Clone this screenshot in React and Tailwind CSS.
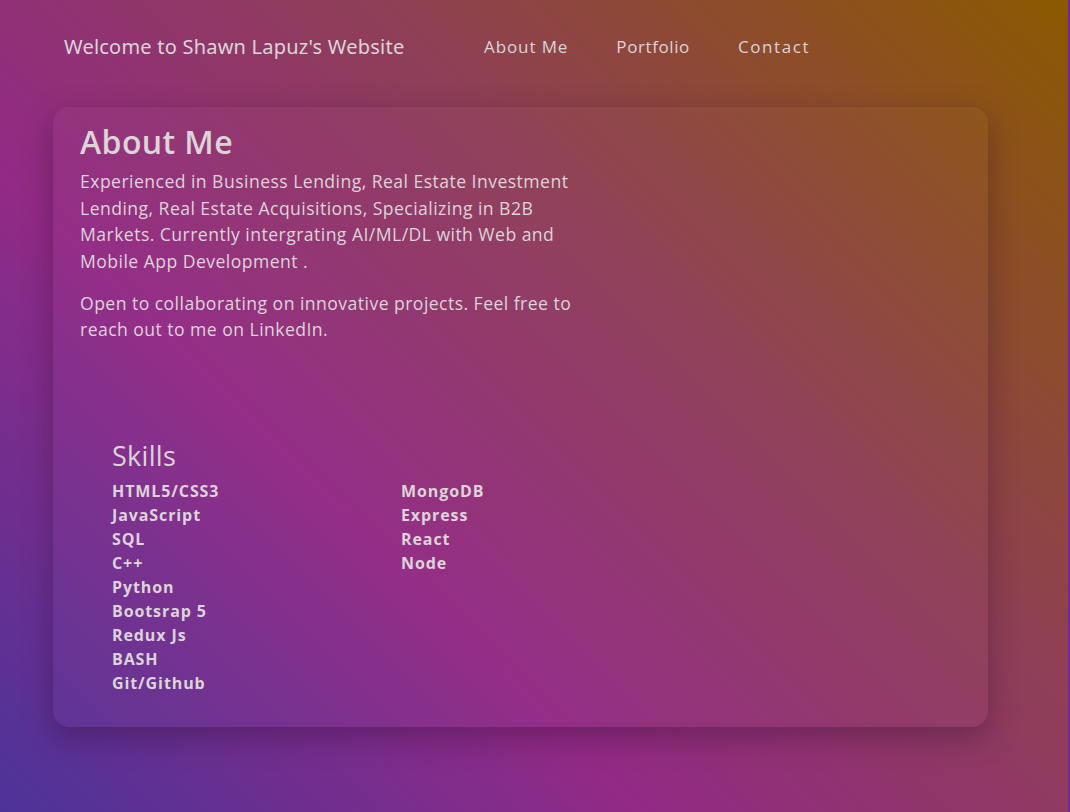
import React from "react";

const leftSkills = [
  "HTML5/CSS3",
  "JavaScript",
  "SQL",
  "C++",
  "Python",
  "Bootsrap 5",
  "Redux Js",
  "BASH",
  "Git/Github",
];

const rightSkills = ["MongoDB", "Express", "React", "Node"];

const App = () => {
  return (
    <div className="w-[1070px] h-[812px] bg-[#74299c] overflow-hidden">
      <div
        className="w-[1068px] h-[812px] text-[#dcd4d8] bg-[linear-gradient(45deg,#4c3399_0%,#922a86_34%,#8f3e58_62%,#8b5a00_100%)]"
        style={{ fontFamily: '"Open Sans", sans-serif' }}
      >
        {/* Header */}
        <header className="h-[94px] flex items-center pl-[64px]">
          <h1
            className="text-[20px] font-normal w-[420px] tracking-[0.22px]"
            style={{ fontFamily: '"Noto Sans", sans-serif' }}
          >
            Welcome to Shawn Lapuz's Website
          </h1>
          <nav className="flex items-center gap-[48px] text-[17px] font-medium tracking-[0.9px]">
            <a href="#about">About Me</a>
            <a href="#portfolio" className="tracking-[0.6px]">Portfolio</a>
            <a href="#contact" className="tracking-[1.6px]">Contact</a>
          </nav>
        </header>

        {/* About card */}
        <section className="ml-[53px] mt-[13px] w-[935px] h-[620px] rounded-2xl bg-white/[0.02] shadow-[0_10px_30px_rgba(40,10,40,0.35)] pt-[16px] px-[27px]">
          <h2 className="text-[32px] leading-[1.2] font-semibold tracking-[0.4px]">
            About Me
          </h2>
          <div className="w-[512px] text-[17.6px] leading-[26.4px] mt-[7px] tracking-[0.45px]">
            <p>
              Experienced in Business Lending, Real Estate Investment Lending,
              Real Estate Acquisitions, Specializing in B2B Markets. Currently
              intergrating AI/ML/DL with Web and Mobile App Development .
            </p>
            <p className="mt-[16px]">
              Open to collaborating on innovative projects. Feel free to reach
              out to me on LinkedIn.
            </p>
          </div>

          <div className="pl-[32px] mt-[97px]">
            <h3 className="text-[27px] leading-[1.2] font-normal tracking-[0.3px]">
              Skills
            </h3>
            <div className="grid grid-cols-[289px_200px] mt-[7px] text-[16px] leading-[24px] font-bold tracking-[0.9px]">
              <ul>
                {leftSkills.map((s) => (
                  <li key={s}>{s}</li>
                ))}
              </ul>
              <ul>
                {rightSkills.map((s) => (
                  <li key={s}>{s}</li>
                ))}
              </ul>
            </div>
          </div>
        </section>
      </div>
    </div>
  );
};

export default App;
